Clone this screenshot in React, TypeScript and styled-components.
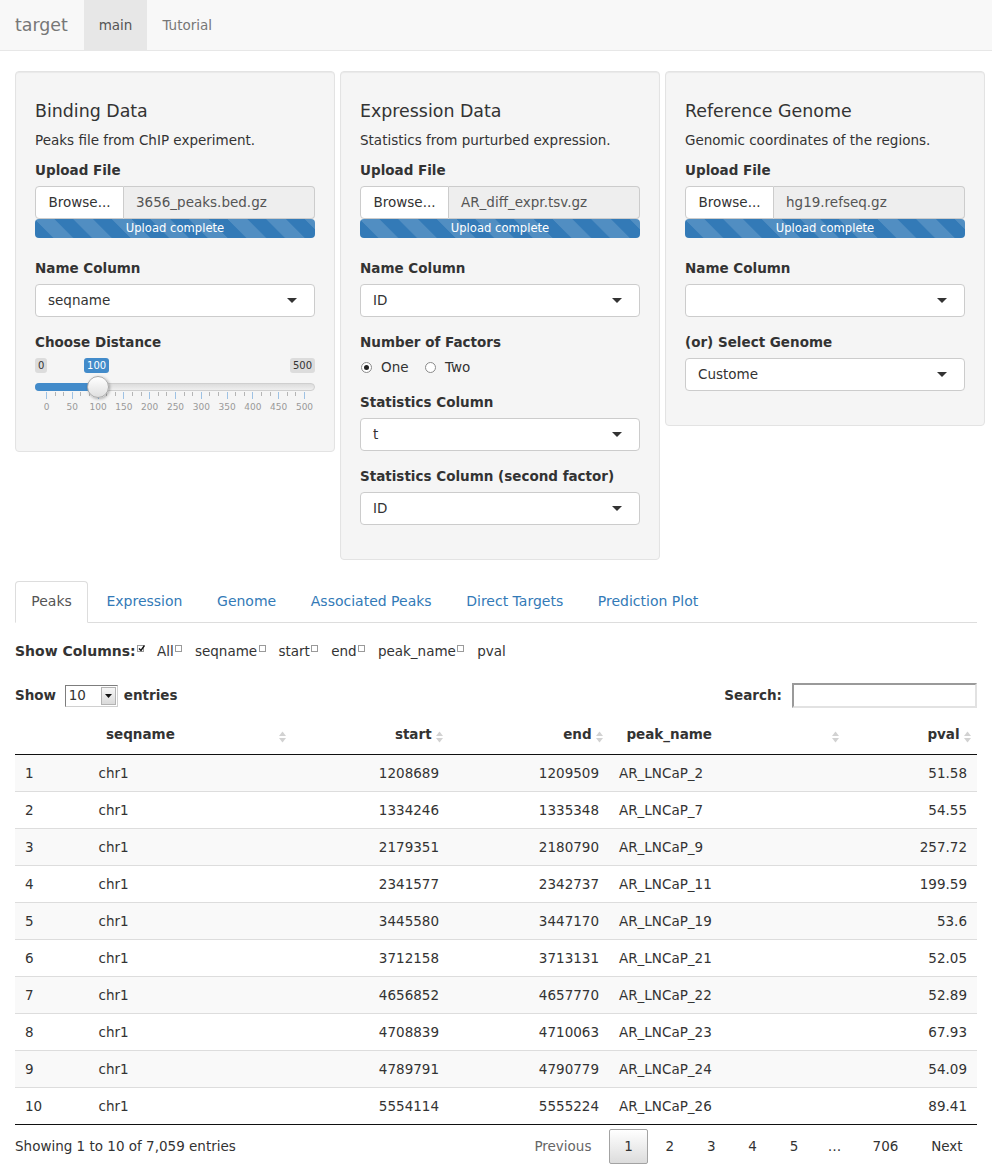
import React from 'react';
import styled, { createGlobalStyle } from 'styled-components';

const GlobalStyle = createGlobalStyle`
  html, body { margin: 0; padding: 0; background: #fff; }
  body {
    font-family: "DejaVu Sans", Verdana, sans-serif;
    font-size: 13.5px;
    line-height: 19px;
    color: #333;
  }
  * { box-sizing: border-box; }
`;

/* ---------- Navbar ---------- */
const Navbar = styled.nav`
  display: flex;
  height: 51px;
  background: #f8f8f8;
  border-bottom: 1px solid #e7e7e7;
  padding-left: 15px;
`;
const Brand = styled.div`
  display: flex;
  align-items: center;
  font-size: 17.4px;
  color: #777;
  margin-right: 15.8px;
`;
const NavItem = styled.div<{ $active?: boolean }>`
  display: flex;
  align-items: center;
  padding: 0 15px;
  height: 50px;
  color: ${p => (p.$active ? '#555' : '#777')};
  background: ${p => (p.$active ? '#e7e7e7' : 'transparent')};
`;

/* ---------- Page ---------- */
const Main = styled.main`
  padding: 20px 15px 0;
`;
const WellRow = styled.div`
  display: flex;
  align-items: flex-start;
  gap: 5px;
  margin-right: -8px;
`;
const Well = styled.section`
  flex: 1 1 0;
  min-width: 0;
  background: #f5f5f5;
  border: 1px solid #e3e3e3;
  border-radius: 4px;
  box-shadow: inset 0 1px 1px rgba(0, 0, 0, 0.05);
  padding: 18px 19px;
`;
const WellTitle = styled.h3`
  margin: 11px 0 10px;
  font-size: 17.4px;
  line-height: 20px;
  font-weight: normal;
`;
const Desc = styled.p`
  margin: 0 0 11px;
`;
const FormGroup = styled.div<{ $mb?: number }>`
  margin-bottom: ${p => (p.$mb ?? 16)}px;
  &:last-child { margin-bottom: 16px; }
`;
const FieldLabel = styled.div`
  font-weight: bold;
  line-height: 19px;
  margin-bottom: 6px;
`;

/* file input */
const FileRow = styled.div`
  display: flex;
  height: 33px;
`;
const BrowseBtn = styled.div`
  width: 89px;
  display: flex;
  align-items: center;
  justify-content: center;
  background: #fff;
  border: 1px solid #ccc;
  border-radius: 4px 0 0 4px;
  color: #333;
`;
const FileName = styled.div`
  flex: 1;
  display: flex;
  align-items: center;
  padding: 0 12px;
  background: #eee;
  border: 1px solid #ccc;
  border-left: none;
  border-radius: 0 4px 4px 0;
  color: #555;
`;
const Progress = styled.div`
  height: 19px;
  border-radius: 4px;
  background-color: #337ab7;
  background-image: linear-gradient(
    45deg,
    rgba(255, 255, 255, 0.15) 25%,
    transparent 25%,
    transparent 50%,
    rgba(255, 255, 255, 0.15) 50%,
    rgba(255, 255, 255, 0.15) 75%,
    transparent 75%,
    transparent
  );
  background-size: 38.6px 38.6px;
  color: #fff;
  font-size: 11.6px;
  line-height: 19px;
  text-align: center;
`;

/* select */
const SelectBox = styled.div`
  height: 33px;
  display: flex;
  align-items: center;
  justify-content: space-between;
  padding: 0 17px 0 12px;
  background: #fff;
  border: 1px solid #ccc;
  border-radius: 4px;
  color: #333;
`;

/* radio */
const RadioRow = styled.div`
  display: flex;
  align-items: center;
  height: 19px;
`;
const RadioItem = styled.label`
  display: flex;
  align-items: center;
  margin-right: 15.5px;
`;
const RadioCircle = styled.span<{ $checked?: boolean }>`
  width: 11px;
  height: 11px;
  border-radius: 50%;
  border: 1px solid #8a8a8a;
  background: #fff;
  margin: 0 9px 0 1px;
  display: flex;
  align-items: center;
  justify-content: center;
  &::after {
    content: '';
    width: 5px;
    height: 5px;
    border-radius: 50%;
    background: ${p => (p.$checked ? '#222' : 'transparent')};
  }
`;

/* slider */
const Slider = styled.div`
  position: relative;
  height: 59px;
`;
const SliderTag = styled.span<{ $blue?: boolean }>`
  position: absolute;
  top: 0;
  height: 15px;
  padding: 0 3px;
  border-radius: 3px;
  font-size: 10px;
  line-height: 15px;
  background: ${p => (p.$blue ? '#428bca' : 'rgba(0,0,0,0.1)')};
  color: ${p => (p.$blue ? '#fff' : '#333')};
`;
const Track = styled.div`
  position: absolute;
  top: 25px;
  left: 0;
  right: 0;
  height: 8px;
  border-radius: 4px;
  background: linear-gradient(#dcdcdc, #efefef);
  border: 1px solid #cfcfcf;
`;
const TrackFill = styled.div`
  position: absolute;
  top: 25px;
  left: 0;
  height: 8px;
  border-radius: 4px 0 0 4px;
  background: #428bca;
`;
const Handle = styled.div`
  position: absolute;
  top: 18px;
  width: 22px;
  height: 22px;
  border-radius: 50%;
  border: 1px solid #aaa;
  background: linear-gradient(#ffffff, #dfdfdf);
  box-shadow: 1px 1px 3px rgba(0, 0, 0, 0.3);
`;
const Tick = styled.span<{ $small?: boolean }>`
  position: absolute;
  top: 34px;
  width: 1px;
  height: ${p => (p.$small ? 4 : 7)}px;
  background: ${p => (p.$small ? '#b5b5b5' : '#9ec2e4')};
`;
const TickLabel = styled.span`
  position: absolute;
  top: 44px;
  transform: translateX(-50%);
  font-size: 9px;
  line-height: 11px;
  color: #999;
`;

/* ---------- Tabs ---------- */
const TabSection = styled.div`
  margin-top: 21px;
`;
const TabList = styled.div`
  display: flex;
  border-bottom: 1px solid #ddd;
`;
const Tab = styled.div<{ $active?: boolean }>`
  margin: 0 2px -1px 0;
  padding: 10px 15.3px 11px;
  font-size: 14px;
  line-height: 19px;
  border: 1px solid ${p => (p.$active ? '#ddd' : 'transparent')};
  border-bottom-color: transparent;
  border-radius: 4px 4px 0 0;
  background: ${p => (p.$active ? '#fff' : 'transparent')};
  color: ${p => (p.$active ? '#555' : '#337ab7')};
`;

const ColumnsLine = styled.div`
  margin-top: 19px;
  line-height: 19px;
  white-space: nowrap;
`;
const ColumnsTitle = styled.span`
  font-weight: bold;
  font-size: 14px;
`;
const Bold = styled.span`
  font-weight: bold;
`;
const CheckBox = styled.span`
  display: inline-block;
  width: 7px;
  height: 7px;
  border: 1px solid #9a9a9a;
  background: #fff;
  vertical-align: 4px;
  margin: 0 12.7px 0 1.6px;
  position: relative;
`;

const LengthRow = styled.div`
  margin-top: 22px;
  height: 25px;
  display: flex;
  align-items: center;
  justify-content: space-between;
`;
const LengthLabel = styled.div`
  display: flex;
  align-items: center;
`;
const NativeSelect = styled.div`
  display: flex;
  align-items: center;
  width: 53px;
  height: 22px;
  margin: 0 6px 0 8.7px;
  padding: 1px 1px 1px 3px;
  border: 1px solid;
  border-color: #7d7d7d #d0d0d0 #d0d0d0 #7d7d7d;
  background: #fff;
`;
const NativeArrow = styled.div`
  margin-left: auto;
  width: 15px;
  height: 100%;
  border: 1px solid #b3b3b3;
  background: linear-gradient(#f6f6f6, #dadada);
  display: flex;
  align-items: center;
  justify-content: center;
`;
const SearchLabel = styled.label`
  display: flex;
  align-items: center;
  font-weight: bold;
`;
const SearchInput = styled.div`
  width: 185px;
  height: 25px;
  margin-left: 10px;
  border: 2px solid;
  border-color: #9a9a9a #e2e2e2 #e2e2e2 #9a9a9a;
  background: #fff;
`;

/* table */
const DataTable = styled.table`
  width: 100%;
  margin-top: 7px;
  border-collapse: separate;
  border-spacing: 0;
  table-layout: fixed;
  border-bottom: 1px solid #111;
`;
const Th = styled.th<{ $right?: boolean }>`
  position: relative;
  padding: 10px 17.4px;
  line-height: 19px;
  font-weight: bold;
  text-align: ${p => (p.$right ? 'right' : 'left')};
  border-bottom: 1px solid #111;
  white-space: nowrap;
`;
const SortIconWrap = styled.span`
  position: absolute;
  right: 6px;
  top: 50%;
  margin-top: -6px;
  width: 7px;
  height: 12px;
  display: block;
`;
const Tr = styled.tr<{ $odd?: boolean }>`
  background: ${p => (p.$odd ? '#f9f9f9' : '#fff')};
  &:not(:first-child) > td { border-top: 1px solid #ddd; }
`;
const Td = styled.td<{ $right?: boolean }>`
  padding: 8px 10px;
  line-height: 20px;
  text-align: ${p => (p.$right ? 'right' : 'left')};
  white-space: nowrap;
`;

const TableFooter = styled.div`
  display: flex;
  justify-content: space-between;
  align-items: flex-start;
`;
const Info = styled.div`
  padding-top: 11.5px;
`;
const Pager = styled.div`
  display: flex;
  padding-top: 4px;
  margin-right: -1px;
`;
const PageBtn = styled.span<{ $current?: boolean; $disabled?: boolean }>`
  margin-left: 2px;
  padding: 7px 14.4px;
  line-height: 19px;
  border: 1px solid ${p => (p.$current ? '#a3a3a3' : 'transparent')};
  border-radius: 2px;
  background: ${p => (p.$current ? 'linear-gradient(#ffffff, #dcdcdc)' : 'transparent')};
  color: ${p => (p.$disabled ? '#666' : '#333')};
`;
const Ellipsis = styled.span`
  padding: 8px 14px;
  line-height: 19px;
  color: #333;
`;

/* ---------- Icons ---------- */
const Caret = () => (
  <svg width="10" height="5" viewBox="0 0 10 5">
    <polygon points="0,0 10,0 5,5" fill="#333" />
  </svg>
);
const SmallCaret = () => (
  <svg width="7" height="4" viewBox="0 0 7 4">
    <polygon points="0,0 7,0 3.5,4" fill="#111" />
  </svg>
);
const SortIcon = () => (
  <SortIconWrap>
    <svg width="7" height="12" viewBox="0 0 7 12">
      <polygon points="0,5 3.5,0.5 7,5" fill="#d2d2d2" />
      <polygon points="0,7 3.5,11.5 7,7" fill="#d2d2d2" />
    </svg>
  </SortIconWrap>
);
const CheckMark = () => (
  <svg width="7" height="7" viewBox="0 0 7 7" style={{ position: 'absolute', left: 0, top: -1 }}>
    <polyline points="1,3.5 3,5.5 6.5,0.5" fill="none" stroke="#111" strokeWidth="1.4" />
  </svg>
);

/* ---------- Pieces ---------- */
const Select: React.FC<{ value: string }> = ({ value }) => (
  <SelectBox>
    <span>{value}</span>
    <Caret />
  </SelectBox>
);

const Upload: React.FC<{ file: string }> = ({ file }) => (
  <FormGroup $mb={21}>
    <FieldLabel>Upload File</FieldLabel>
    <FileRow>
      <BrowseBtn>Browse...</BrowseBtn>
      <FileName>{file}</FileName>
    </FileRow>
    <Progress>Upload complete</Progress>
  </FormGroup>
);

const DistanceSlider: React.FC = () => {
  const gridLeft = 11;
  const gridSpan = 258;
  const value = 100;
  const max = 500;
  const handleX = gridLeft + (value / max) * gridSpan;
  const ticks: React.ReactNode[] = [];
  for (let i = 0; i <= 10; i++) {
    const x = gridLeft + (gridSpan / 10) * i;
    if (i > 0) {
      for (let s = 1; s <= 2; s++) {
        const sx = x - (gridSpan / 30) * s;
        ticks.push(<Tick key={`s${i}-${s}`} $small style={{ left: sx }} />);
      }
    }
    ticks.push(<Tick key={`b${i}`} style={{ left: x }} />);
    ticks.push(
      <TickLabel key={`l${i}`} style={{ left: x + 0.5 }}>
        {i * 50}
      </TickLabel>
    );
  }
  return (
    <Slider>
      <SliderTag style={{ left: 0 }}>0</SliderTag>
      <SliderTag style={{ right: 0 }}>500</SliderTag>
      <SliderTag $blue style={{ left: handleX - 13.5 }}>100</SliderTag>
      <Track />
      <TrackFill style={{ width: handleX }} />
      {ticks}
      <Handle style={{ left: handleX - 11 }} />
    </Slider>
  );
};

const rows: [string, string, string, string, string][] = [
  ['chr1', '1208689', '1209509', 'AR_LNCaP_2', '51.58'],
  ['chr1', '1334246', '1335348', 'AR_LNCaP_7', '54.55'],
  ['chr1', '2179351', '2180790', 'AR_LNCaP_9', '257.72'],
  ['chr1', '2341577', '2342737', 'AR_LNCaP_11', '199.59'],
  ['chr1', '3445580', '3447170', 'AR_LNCaP_19', '53.6'],
  ['chr1', '3712158', '3713131', 'AR_LNCaP_21', '52.05'],
  ['chr1', '4656852', '4657770', 'AR_LNCaP_22', '52.89'],
  ['chr1', '4708839', '4710063', 'AR_LNCaP_23', '67.93'],
  ['chr1', '4789791', '4790779', 'AR_LNCaP_24', '54.09'],
  ['chr1', '5554114', '5555224', 'AR_LNCaP_26', '89.41'],
];

const columns = ['seqname', 'start', 'end', 'peak_name', 'pval'];

export default function App() {
  return (
    <>
      <GlobalStyle />
      <Navbar>
        <Brand>target</Brand>
        <NavItem $active>main</NavItem>
        <NavItem>Tutorial</NavItem>
      </Navbar>
      <Main>
        <WellRow>
          <Well>
            <WellTitle>Binding Data</WellTitle>
            <Desc>Peaks file from ChIP experiment.</Desc>
            <Upload file="3656_peaks.bed.gz" />
            <FormGroup>
              <FieldLabel>Name Column</FieldLabel>
              <Select value="seqname" />
            </FormGroup>
            <FormGroup>
              <FieldLabel>Choose Distance</FieldLabel>
              <DistanceSlider />
            </FormGroup>
          </Well>
          <Well>
            <WellTitle>Expression Data</WellTitle>
            <Desc>Statistics from purturbed expression.</Desc>
            <Upload file="AR_diff_expr.tsv.gz" />
            <FormGroup>
              <FieldLabel>Name Column</FieldLabel>
              <Select value="ID" />
            </FormGroup>
            <FormGroup>
              <FieldLabel>Number of Factors</FieldLabel>
              <RadioRow>
                <RadioItem>
                  <RadioCircle $checked />
                  One
                </RadioItem>
                <RadioItem>
                  <RadioCircle />
                  Two
                </RadioItem>
              </RadioRow>
            </FormGroup>
            <FormGroup>
              <FieldLabel>Statistics Column</FieldLabel>
              <Select value="t" />
            </FormGroup>
            <FormGroup>
              <FieldLabel>Statistics Column (second factor)</FieldLabel>
              <Select value="ID" />
            </FormGroup>
          </Well>
          <Well>
            <WellTitle>Reference Genome</WellTitle>
            <Desc>Genomic coordinates of the regions.</Desc>
            <Upload file="hg19.refseq.gz" />
            <FormGroup>
              <FieldLabel>Name Column</FieldLabel>
              <Select value="" />
            </FormGroup>
            <FormGroup>
              <FieldLabel>(or) Select Genome</FieldLabel>
              <Select value="Custome" />
            </FormGroup>
          </Well>
        </WellRow>

        <TabSection>
          <TabList>
            <Tab $active>Peaks</Tab>
            <Tab>Expression</Tab>
            <Tab>Genome</Tab>
            <Tab>Associated Peaks</Tab>
            <Tab>Direct Targets</Tab>
            <Tab>Prediction Plot</Tab>
          </TabList>

          <ColumnsLine>
            <ColumnsTitle>Show Columns:</ColumnsTitle>
            <CheckBox>
              <CheckMark />
            </CheckBox>
            All
            {columns.map(c => (
              <React.Fragment key={c}>
                <CheckBox />
                {c}
              </React.Fragment>
            ))}
          </ColumnsLine>

          <LengthRow>
            <LengthLabel>
              <Bold>Show</Bold>
              <NativeSelect>
                10
                <NativeArrow>
                  <SmallCaret />
                </NativeArrow>
              </NativeSelect>
              <Bold>entries</Bold>
            </LengthLabel>
            <SearchLabel>
              Search:
              <SearchInput />
            </SearchLabel>
          </LengthRow>

          <DataTable>
            <colgroup>
              <col style={{ width: 73.6 }} />
              <col style={{ width: 203.4 }} />
              <col style={{ width: 157 }} />
              <col style={{ width: 160 }} />
              <col style={{ width: 236 }} />
              <col style={{ width: 132 }} />
            </colgroup>
            <thead>
              <tr>
                <Th />
                <Th>
                  seqname
                  <SortIcon />
                </Th>
                <Th $right>
                  start
                  <SortIcon />
                </Th>
                <Th $right>
                  end
                  <SortIcon />
                </Th>
                <Th>
                  peak_name
                  <SortIcon />
                </Th>
                <Th $right>
                  pval
                  <SortIcon />
                </Th>
              </tr>
            </thead>
            <tbody>
              {rows.map((r, i) => (
                <Tr key={i} $odd={i % 2 === 0}>
                  <Td>{i + 1}</Td>
                  <Td>{r[0]}</Td>
                  <Td $right>{r[1]}</Td>
                  <Td $right>{r[2]}</Td>
                  <Td>{r[3]}</Td>
                  <Td $right>{r[4]}</Td>
                </Tr>
              ))}
            </tbody>
          </DataTable>

          <TableFooter>
            <Info>Showing 1 to 10 of 7,059 entries</Info>
            <Pager>
              <PageBtn $disabled>Previous</PageBtn>
              <PageBtn $current>1</PageBtn>
              <PageBtn>2</PageBtn>
              <PageBtn>3</PageBtn>
              <PageBtn>4</PageBtn>
              <PageBtn>5</PageBtn>
              <Ellipsis>…</Ellipsis>
              <PageBtn>706</PageBtn>
              <PageBtn>Next</PageBtn>
            </Pager>
          </TableFooter>
        </TabSection>
      </Main>
    </>
  );
}
